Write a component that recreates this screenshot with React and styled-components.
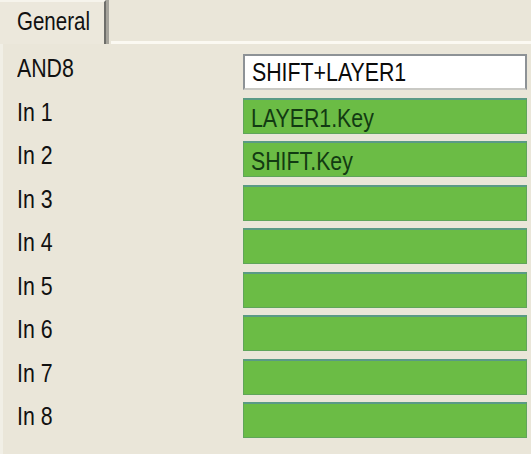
import React from "react";
import styled, { createGlobalStyle } from "styled-components";

const Global = createGlobalStyle`
  html, body {
    margin: 0;
    padding: 0;
    background: #eae6d9;
  }
  body {
    width: 531px;
    height: 454px;
    overflow: hidden;
    font-family: "Liberation Sans", Arial, sans-serif;
  }
`;

const Window = styled.div`
  width: 531px;
  height: 454px;
  background: #eae6d9;
  display: flex;
  flex-direction: column;
`;

const TabStrip = styled.div`
  display: flex;
  align-items: flex-end;
  height: 44px;
  flex: 0 0 auto;
`;

const Tab = styled.div`
  width: 106px;
  height: 44px;
  box-sizing: border-box;
  padding: 5px 0 0 17px;
  line-height: 28px;
  color: #111;
  background: #ece8dc;
  border-top: 2px solid #f6f4ec;
  border-right: 2px solid #6e6e6a;
  box-shadow: 3px 0 0 #a6a49c;
  position: relative;
  z-index: 1;
`;

const StripRest = styled.div`
  flex: 1;
  height: 3px;
  margin-left: 5px;
  background: #fbf9f2;
`;

const Panel = styled.div`
  flex: 1;
  border-left: 3px solid #f1efe6;
  padding: 10px 4px 0 14px;
  display: grid;
  grid-template-columns: 226px 1fr;
  grid-auto-rows: 36px;
  row-gap: 7.5px;
  align-content: start;
`;

/* Dialog font: tall, condensed (the original UI is stretched vertically) */
const Text = styled.span`
  display: inline-block;
  font-size: ${(p) => p.$size || 26}px;
  transform: scaleX(0.82);
  transform-origin: 0 50%;
  white-space: nowrap;
`;

const Label = styled.div`
  line-height: 26px;
  padding-top: 1px;
  color: #111;
  white-space: nowrap;
`;

const Field = styled.div`
  box-sizing: border-box;
  height: 36px;
  padding-left: 7px;
  white-space: nowrap;
  overflow: hidden;
  ${(p) =>
    p.$kind === "edit"
      ? `
    background: #ffffff;
    color: #0a0a0a;
    border: 2px solid #8d9296;
    border-bottom-color: #c9c9c4;
    line-height: 32px;
  `
      : `
    background: #6bbc45;
    color: #123a12;
    border: 1px solid #5fa55a;
    border-top: 2px solid #5a9a86;
    line-height: 37px;
  `}
`;

const rows = [
  { label: "AND8", value: "SHIFT+LAYER1", kind: "edit" },
  { label: "In 1", value: "LAYER1.Key" },
  { label: "In 2", value: "SHIFT.Key" },
  { label: "In 3", value: "" },
  { label: "In 4", value: "" },
  { label: "In 5", value: "" },
  { label: "In 6", value: "" },
  { label: "In 7", value: "" },
  { label: "In 8", value: "" },
];

export default function App() {
  return (
    <Window>
      <Global />
      <TabStrip>
        <Tab>
          <Text $size={25}>General</Text>
        </Tab>
        <StripRest />
      </TabStrip>
      <Panel>
        {rows.map((r) => (
          <React.Fragment key={r.label}>
            <Label>
              <Text>{r.label}</Text>
            </Label>
            <Field $kind={r.kind || "link"}>
              {r.value && <Text>{r.value}</Text>}
            </Field>
          </React.Fragment>
        ))}
      </Panel>
    </Window>
  );
}
